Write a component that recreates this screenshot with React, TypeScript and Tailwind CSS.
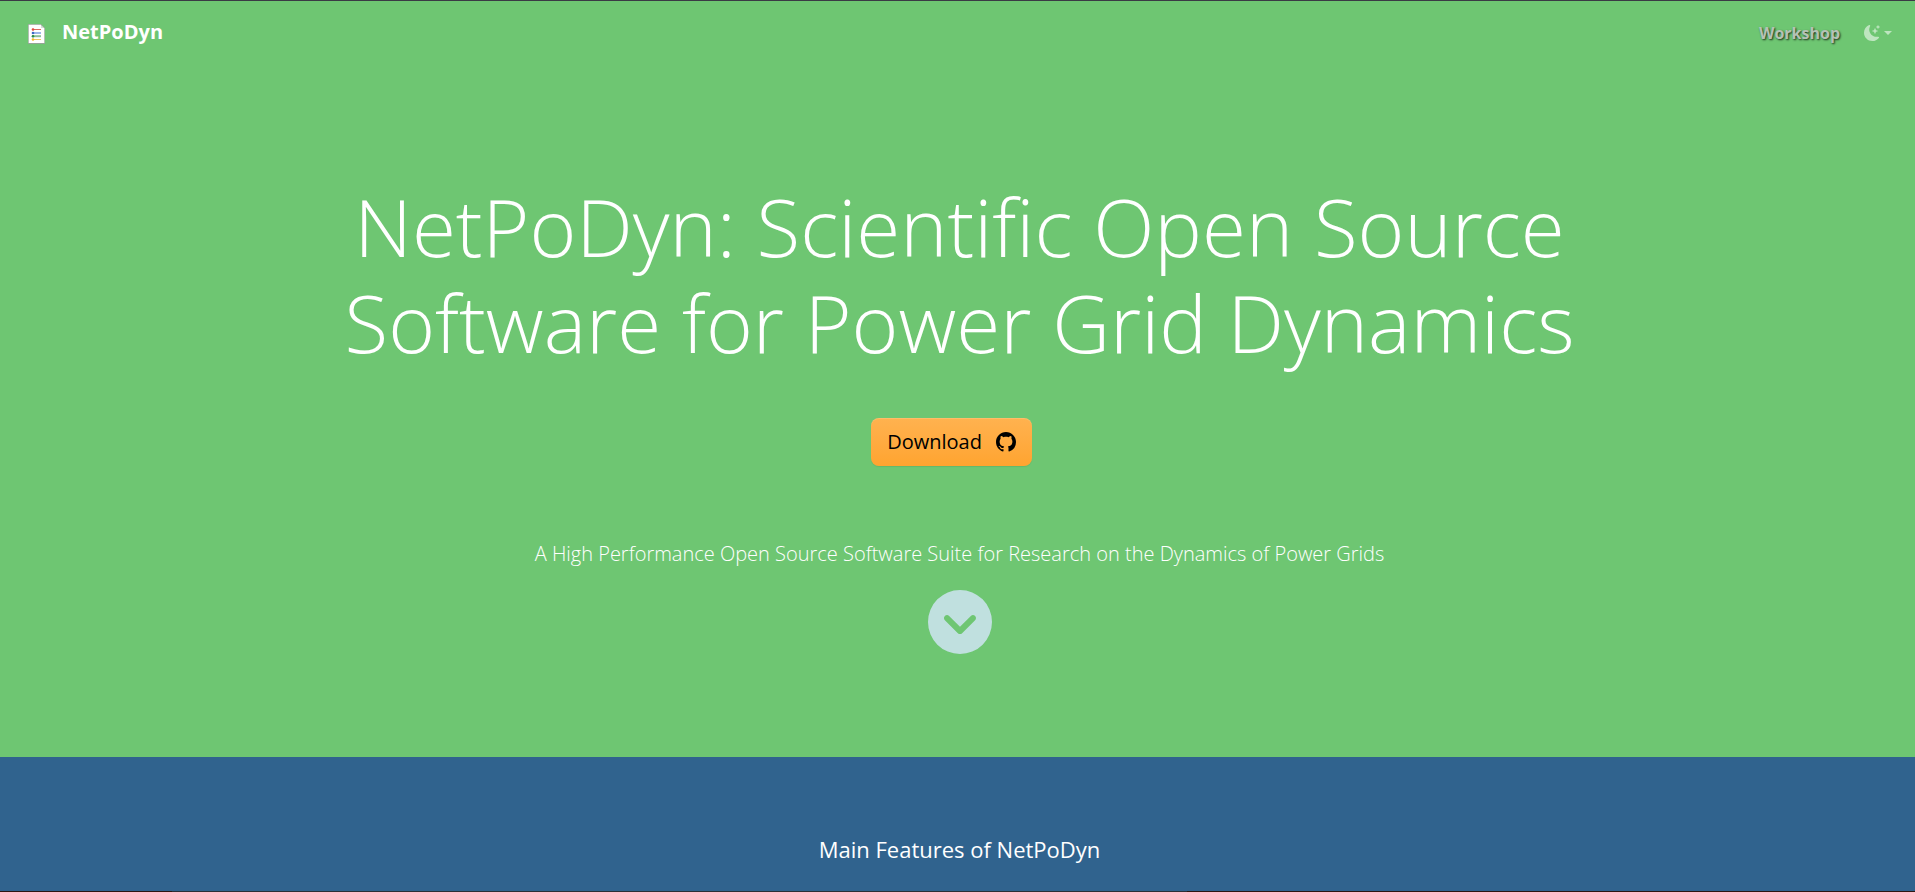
import { BsGithub, BsMoonStarsFill } from "react-icons/bs";
import { FaCircleChevronDown } from "react-icons/fa6";

function Logo() {
  return (
    <svg viewBox="0 0 17 20" className="h-5 w-[17px]" aria-hidden="true">
      <path d="M0 0H13L17 4V20H0Z" fill="#93a595" />
      <path d="M.7 .7H13V4H16.3V19H.7Z" fill="#fff" />
      <path d="M13 1V4H16.3Z" fill="#d5ded6" />
      <path d="M4 5.5H13" stroke="#dd6a60" />
      <path d="M4 9H13" stroke="#9db6ea" strokeWidth="2" />
      <path d="M4 12.2H13" stroke="#8dbf99" strokeWidth="2" />
      <path d="M4 15.5H13" stroke="#edc765" />
      <circle cx="5" cy="5.5" r="1.3" fill="#e2483d" />
      <circle cx="5" cy="9" r="1.3" fill="#3c68c4" />
      <circle cx="5" cy="12.2" r="1.3" fill="#2f8f4b" />
      <circle cx="5" cy="15.5" r="1.3" fill="#f2b92c" />
    </svg>
  );
}

function Navbar() {
  return (
    <nav className="flex items-start justify-between pt-3 pr-[23px] pl-7">
      <a href="#top" className="flex items-center gap-[17px] text-xl leading-[38px] font-bold text-white">
        <span className="pt-1">
          <Logo />
        </span>
        NetPoDyn
      </a>
      <div className="flex h-10 items-center gap-6">
        <a
          href="#workshop"
          className="font-bold text-[#b5c2b6] [text-shadow:1px_1px_2px_rgba(0,0,0,0.75)]"
        >
          Workshop
        </a>
        <button type="button" aria-label="Toggle theme" className="flex items-center gap-1 text-white/55">
          <BsMoonStarsFill className="size-4" />
          <svg viewBox="0 0 8 4" className="h-1 w-2" aria-hidden="true">
            <path d="M0 0H8L4 4Z" fill="currentColor" />
          </svg>
        </button>
      </div>
    </nav>
  );
}

export default function App() {
  return (
    <div id="top" className="flex min-h-screen flex-col bg-[#6ec672] font-['Open_Sans',sans-serif]">
      <header className="border-t border-[#3a3a44]">
        <Navbar />
      </header>
      <main className="flex grow flex-col">
        <section className="flex grow flex-col items-center pt-[125px] pr-4 pb-10 pl-5 text-center text-white">
          <h1 className="max-w-[1296px] text-[80px] leading-24 font-light">
            NetPoDyn: Scientific Open Source Software for Power Grid Dynamics
          </h1>
          <a
            href="#download"
            className="mt-12 mr-4 flex items-center gap-3.5 rounded-lg bg-linear-to-b from-[#ffb24f] to-[#ffa42f] px-4 py-2 text-xl leading-8 text-black shadow-[inset_0_1px_0_rgba(255,255,255,0.15),0_1px_1px_rgba(0,0,0,0.075)]"
          >
            Download
            <BsGithub className="size-5" />
          </a>
          <p className="mt-18 text-xl leading-8 font-light">
            A High Performance Open Source Software Suite for Research on the Dynamics of Power Grids
          </p>
          <a href="#features" aria-label="Main features" className="mt-5 text-[#c0e0df]">
            <FaCircleChevronDown className="size-16" />
          </a>
        </section>
        <section id="features" className="bg-[#30638e] pt-[77px] text-center text-white">
          <h2 className="pr-4 pb-[27px] pl-5 text-[22px] leading-[30px]">Main Features of NetPoDyn</h2>
          <div className="flex h-px bg-[#2b3038]">
            <div className="w-[9%] bg-[#2d1712]" />
            <div className="grow" />
            <div className="w-[38%] bg-[#2d1712]" />
          </div>
        </section>
      </main>
    </div>
  );
}
